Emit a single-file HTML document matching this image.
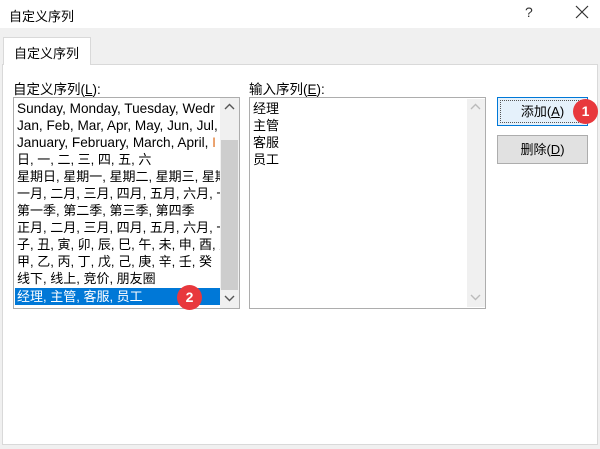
<!DOCTYPE html>
<html><head><meta charset="utf-8"><style>
*{margin:0;padding:0;box-sizing:border-box}
body{width:600px;height:449px;background:#f0f0f0;font-family:"Liberation Sans","Noto Sans CJK SC",sans-serif;font-size:13px;color:#000;position:relative;overflow:hidden}
.abs{position:absolute}
.title{left:0;top:0;width:600px;height:28px;background:#fff}
.panel{left:2px;top:64px;width:596px;height:381px;background:#fff;border:1px solid #d9d9d9}
.tab{left:3px;top:37px;width:88px;height:28px;background:#fff;border:1px solid #d9d9d9;border-bottom:none;padding:5px 0 0 10px;font-size:13px}
.box{background:#fff;border:1px solid #adadad}
.line{position:absolute;left:3px;height:17px;line-height:17px;white-space:nowrap;font-size:13px}
.lat{font-size:13.6px}
.sb{background:#f0f0f0}
.btn{width:91px;height:29px;text-align:center;line-height:27px;font-size:13px}
.badge{width:25px;height:25px;border-radius:50%;background:#e8383d;color:#fff;text-align:center;line-height:25px;font-size:14px;font-weight:bold}
</style></head><body>
<div class="abs title"></div>
<div class="abs" style="left:9px;top:6px;font-size:13px">自定义序列</div>
<div class="abs" style="left:525px;top:4px;font-size:14px;color:#333">?</div>
<svg class="abs" style="left:575px;top:5px" width="14" height="14"><path d="M1 1L13 13M13 1L1 13" stroke="#333" stroke-width="1.2"/></svg>
<div class="abs panel"></div>
<div class="abs tab">自定义序列</div>
<div class="abs" style="left:13px;top:78px;font-size:13.5px">自定义序列(<u>L</u>):</div>
<div class="abs" style="left:249px;top:78px;font-size:13.5px">输入序列(<u>E</u>):</div>

<div class="abs box" style="left:13px;top:97px;width:227px;height:212px;overflow:hidden">
 <div class="line lat" style="top:2px">Sunday, Monday, Tuesday, Wedr</div>
 <div class="line lat" style="top:19px">Jan, Feb, Mar, Apr, May, Jun, Jul,</div>
 <div class="line lat" style="top:36px">January, February, March, April, <span style="color:#e07020">I</span></div>
 <div class="line" style="top:53px">日, 一, 二, 三, 四, 五, 六</div>
 <div class="line" style="top:70px">星期日, 星期一, 星期二, 星期三, 星期</div>
 <div class="line" style="top:87px">一月, 二月, 三月, 四月, 五月, 六月, 一</div>
 <div class="line" style="top:104px">第一季, 第二季, 第三季, 第四季</div>
 <div class="line" style="top:121px">正月, 二月, 三月, 四月, 五月, 六月, 一</div>
 <div class="line" style="top:138px">子, 丑, 寅, 卯, 辰, 巳, 午, 未, 申, 酉, 月</div>
 <div class="line" style="top:155px">甲, 乙, 丙, 丁, 戊, 己, 庚, 辛, 壬, 癸</div>
 <div class="line" style="top:172px">线下, 线上, 竞价, 朋友圈</div>
 <div class="abs" style="left:1px;top:190px;width:205px;height:17px;background:#0078d7"></div>
 <div class="line" style="top:190px;color:#fff">经理, 主管, 客服, 员工</div>
 <div class="abs sb" style="left:206px;top:0;width:19px;height:210px"></div>
 <div class="abs" style="left:207px;top:42px;width:17px;height:150px;background:#cdcdcd"></div>
 <svg class="abs" style="left:210px;top:5px" width="11" height="8"><path d="M1 6L5.5 1.5L10 6" stroke="#555" stroke-width="1.4" fill="none"/></svg>
 <svg class="abs" style="left:210px;top:196px" width="11" height="8"><path d="M1 2L5.5 6.5L10 2" stroke="#555" stroke-width="1.4" fill="none"/></svg>
</div>
<div class="abs badge" style="left:177px;top:285px">2</div>

<div class="abs box" style="left:249px;top:97px;width:237px;height:212px;overflow:hidden">
 <div class="line" style="top:2px">经理</div>
 <div class="line" style="top:19px">主管</div>
 <div class="line" style="top:36px">客服</div>
 <div class="line" style="top:53px">员工</div>
 <div class="abs sb" style="left:217px;top:1px;width:18px;height:208px"></div>
 <svg class="abs" style="left:220px;top:5px" width="11" height="8"><path d="M1 6L5.5 1.5L10 6" stroke="#bbb" stroke-width="1.4" fill="none"/></svg>
 <svg class="abs" style="left:220px;top:195px" width="11" height="8"><path d="M1 2L5.5 6.5L10 2" stroke="#bbb" stroke-width="1.4" fill="none"/></svg>
</div>

<div class="abs btn" style="left:497px;top:97px;background:#e5f1fb;border:1px solid #0078d7"><div style="position:absolute;inset:2px;border:1px dotted #555"></div>添加(<u>A</u>)</div>
<div class="abs badge" style="left:573px;top:99px">1</div>
<div class="abs btn" style="left:497px;top:135px;background:#e1e1e1;border:1px solid #adadad">删除(<u>D</u>)</div>
</body></html>
